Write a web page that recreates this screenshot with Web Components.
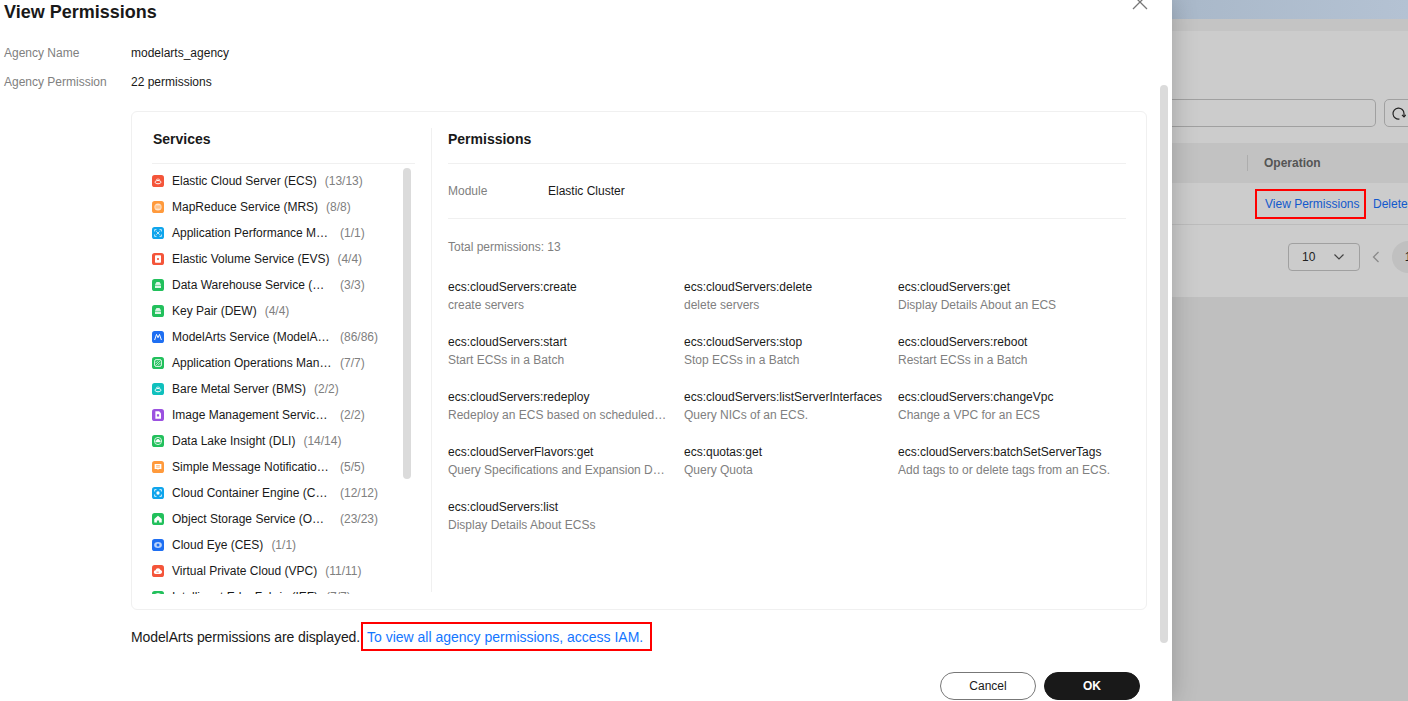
<!DOCTYPE html>
<html lang="en">
<head>
<meta charset="utf-8">
<title>View Permissions</title>
<style>
    html, body { margin: 0; height: 100%; overflow: hidden; font-family: "Liberation Sans", Arial, sans-serif; }
</style>
</head>
<body>
<perm-screen>
    <perm-dialog slot="dialog" heading="View Permissions"></perm-dialog>
    <behind-page slot="page"></behind-page>
</perm-screen>

<script>
const GLYPHS = {
    cloud: '<path d="M4 9.5c0-1.2 1.8-2.2 4-2.2s4 1 4 2.2-1.8 2.2-4 2.2-4-1-4-2.2z" fill="none" stroke="#fff" stroke-width="1.3"/><path d="M5.5 6.5C6 5 10 5 10.500 6.500" fill="none" stroke="#fff" stroke-width="1"/>',
    disc: '<circle cx="8" cy="8" r="4.800" fill="#fff" opacity=".75"/><path d="M4.500 6.800h7M4.500 9.200h7" stroke="#ff9a3c" stroke-width="1"/>',
    apm: '<path d="M3.500 6V3.500H6M10 3.500h2.500V6M3.500 10v2.500H6M10 12.500h2.500V10" fill="none" stroke="#fff" stroke-width="1"/><path d="M5.800 5.800 10.200 10.200M10.200 5.800 5.800 10.200" stroke="#fff" stroke-width="1"/>',
    volume: '<rect x="4" y="3" width="8" height="10" rx="1" fill="#fff"/><rect x="6.800" y="6.800" width="2.400" height="2.400" fill="#f4553a"/>',
    lock: '<path d="M4 7.200 6 4h4l2 3.200V12H4z" fill="#fff" opacity=".85"/><path d="M4 8.500h8" stroke="#22c05c" stroke-width=".8"/>',
    model: '<path d="M3.500 12 6 4.500 8 9l2-4.500L12.500 12" fill="none" stroke="#fff" stroke-width="1.300"/>',
    aom: '<rect x="3.500" y="3.500" width="9" height="9" rx="2" fill="none" stroke="#fff" stroke-width="1.200"/><path d="M5 11l6-6M5 8l3-3M8 11l3-3" stroke="#fff" stroke-width=".9"/>',
    image: '<path d="M4.500 3h5l2.500 2.500V13H4.500z" fill="#fff"/><rect x="6.500" y="7" width="3" height="3" fill="#9b51e0"/>',
    lake: '<circle cx="8" cy="8" r="4.800" fill="none" stroke="#fff" stroke-width="1.100"/><path d="M5.500 9.800a1.500 1.500 0 0 1 .3-2.900 2.300 2.300 0 0 1 4.400 0 1.500 1.500 0 0 1 .3 2.900z" fill="#fff"/>',
    message: '<path d="M3.500 4h9v6.500H9L8 12l-1-1.500H3.500z" fill="#fff"/><path d="M5.500 6.200h5M5.500 8.200h5" stroke="#ff9a3c" stroke-width=".9"/>',
    cce: '<path d="M3.500 6V3.500H6M10 3.500h2.500V6M3.500 10v2.500H6M10 12.500h2.500V10" fill="none" stroke="#fff" stroke-width="1.100"/><circle cx="8" cy="8" r="2.200" fill="#fff"/>',
    home: '<path d="M8 3.500 13 8v4.500h-3.500V10h-3v2.500H3V8z" fill="#fff"/>',
    eye: '<ellipse cx="8" cy="8" rx="5.200" ry="4" fill="#fff" opacity=".7"/><circle cx="8" cy="8" r="2" fill="#1f6ff2"/>',
    vpc: '<path d="M5 12a2.500 2.500 0 0 1-.300-5 3.500 3.500 0 0 1 6.700-.500A2.800 2.800 0 0 1 11 12z" fill="#fff"/><path d="M6 9.500h3" stroke="#f4553a" stroke-width="1"/>'
};

const SERVICES = [
    ['Elastic Cloud Server (ECS)', '13/13', '#f4553a', 'cloud'],
    ['MapReduce Service (MRS)', '8/8', '#ff9a3c', 'disc'],
    ['Application Performance M…', '1/1', '#0fa5ec', 'apm'],
    ['Elastic Volume Service (EVS)', '4/4', '#f4553a', 'volume'],
    ['Data Warehouse Service (…', '3/3', '#22c05c', 'lock'],
    ['Key Pair (DEW)', '4/4', '#22c05c', 'lock'],
    ['ModelArts Service (ModelA…', '86/86', '#1f6ff2', 'model'],
    ['Application Operations Man…', '7/7', '#22c05c', 'aom'],
    ['Bare Metal Server (BMS)', '2/2', '#0fc0bd', 'cloud'],
    ['Image Management Servic…', '2/2', '#9b51e0', 'image'],
    ['Data Lake Insight (DLI)', '14/14', '#22c05c', 'lake'],
    ['Simple Message Notificatio…', '5/5', '#ff9a3c', 'message'],
    ['Cloud Container Engine (C…', '12/12', '#0fa5ec', 'cce'],
    ['Object Storage Service (O…', '23/23', '#22c05c', 'home'],
    ['Cloud Eye (CES)', '1/1', '#1f6ff2', 'eye'],
    ['Virtual Private Cloud (VPC)', '11/11', '#f4553a', 'vpc'],
    ['Intelligent EdgeFabric (IEF)', '7/7', '#22c05c', 'lake']
];

const PERMISSIONS = [
    ['ecs:cloudServers:create', 'create servers'],
    ['ecs:cloudServers:delete', 'delete servers'],
    ['ecs:cloudServers:get', 'Display Details About an ECS'],
    ['ecs:cloudServers:start', 'Start ECSs in a Batch'],
    ['ecs:cloudServers:stop', 'Stop ECSs in a Batch'],
    ['ecs:cloudServers:reboot', 'Restart ECSs in a Batch'],
    ['ecs:cloudServers:redeploy', 'Redeploy an ECS based on scheduled…'],
    ['ecs:cloudServers:listServerInterfaces', 'Query NICs of an ECS.'],
    ['ecs:cloudServers:changeVpc', 'Change a VPC for an ECS'],
    ['ecs:cloudServerFlavors:get', 'Query Specifications and Expansion D…'],
    ['ecs:quotas:get', 'Query Quota'],
    ['ecs:cloudServers:batchSetServerTags', 'Add tags to or delete tags from an ECS.'],
    ['ecs:cloudServers:list', 'Display Details About ECSs']
];

class PermScreen extends HTMLElement {
    connectedCallback() {
        this.attachShadow({ mode: 'open' });
        this.shadowRoot.innerHTML = `
            <style>
                :host {
                    display: grid;
                    grid-template-columns: 1172px 1fr;
                    height: 701px;
                    overflow: hidden;
                    font-family: "Liberation Sans", Arial, sans-serif;
                }
                ::slotted([slot="dialog"]) {
                    position: relative;
                    z-index: 1;
                }
            </style>
            <slot name="dialog"></slot>
            <slot name="page"></slot>
        `;
    }
}

class BehindPage extends HTMLElement {
    connectedCallback() {
        this.attachShadow({ mode: 'open' });
        this.shadowRoot.innerHTML = `
            <style>
                :host {
                    display: flex;
                    flex-direction: column;
                    height: 701px;
                    overflow: hidden;
                    background: #bfbfbf;
                    font-size: 12px;
                }
                .banner { height: 19px; flex: none; background: linear-gradient(90deg, #a9b8c9, #b4c2d3); }
                .strip { height: 12px; flex: none; background: #c4c4c4; }
                .panel { height: 266px; flex: none; background: #cccccc; overflow: hidden; }
                .search { display: flex; gap: 8px; margin-top: 68px; height: 28px; }
                .input {
                    width: 204px;
                    flex: none;
                    box-sizing: border-box;
                    border: 1px solid #a0a0a0;
                    border-left: none;
                    border-radius: 0 5px 5px 0;
                }
                .refresh {
                    width: 40px;
                    flex: none;
                    box-sizing: border-box;
                    border: 1px solid #a0a0a0;
                    border-radius: 5px;
                    display: flex;
                    align-items: center;
                    padding-left: 6px;
                }
                .thead {
                    display: flex;
                    align-items: center;
                    height: 40px;
                    margin-top: 16px;
                    background: #c2c2c2;
                    padding-left: 75px;
                }
                .thead i { width: 1px; height: 16px; background: #adadad; margin-right: 16px; }
                .thead b { color: #555; }
                .row {
                    display: flex;
                    align-items: center;
                    height: 42px;
                    box-sizing: border-box;
                    border-bottom: 1px solid #bcbcbc;
                    padding-left: 83px;
                    color: #1259cc;
                    white-space: nowrap;
                }
                .mark {
                    border: 2px solid #ff0000;
                    height: 30px;
                    width: 111px;
                    box-sizing: border-box;
                    display: flex;
                    align-items: center;
                    padding-left: 8px;
                    margin-right: 7px;
                }
                .pager { display: flex; align-items: center; height: 32px; margin-top: 16px; padding-left: 116px; }
                .select {
                    width: 72px;
                    height: 28px;
                    flex: none;
                    box-sizing: border-box;
                    border: 1px solid #a0a0a0;
                    border-radius: 4px;
                    display: flex;
                    align-items: center;
                    justify-content: space-between;
                    padding: 0 15px 0 13px;
                    color: #222;
                }
                .prev { margin-left: 12px; flex: none; }
                .page {
                    width: 32px;
                    height: 32px;
                    flex: none;
                    margin-left: 12px;
                    border-radius: 50%;
                    background: #c0c0c0;
                    display: flex;
                    align-items: center;
                    justify-content: center;
                    color: #222;
                }
            </style>
            <div class="banner"></div>
            <div class="strip"></div>
            <div class="panel">
                <div class="search">
                    <div class="input"></div>
                    <div class="refresh">
                        <svg width="15" height="15" viewBox="0 0 15 15" fill="none" stroke="#222" stroke-width="1.200"><path d="M8.500 13A5.500 5.500 0 1 1 13 7.500V10.500"/><path d="M11 8.800 13 10.800 14.800 8.800"/></svg>
                    </div>
                </div>
                <div class="thead"><i></i><b>Operation</b></div>
                <div class="row"><div class="mark">View Permissions</div><span>Delete</span></div>
                <div class="pager">
                    <div class="select">
                        <span>10</span>
                        <svg width="10" height="6" viewBox="0 0 10 6" fill="none" stroke="#444" stroke-width="1.200"><path d="M.5.5 5 5 9.500.5"/></svg>
                    </div>
                    <svg class="prev" width="8" height="12" viewBox="0 0 8 12" fill="none" stroke="#8a8a8a" stroke-width="1.300"><path d="M6.500 1 1.500 6l5 5"/></svg>
                    <div class="page">1</div>
                </div>
            </div>
        `;
    }
}

class PermDialog extends HTMLElement {
    connectedCallback() {
        this.attachShadow({ mode: 'open' });
        this.shadowRoot.innerHTML = `
            <style>
                :host {
                    display: block;
                    width: 1172px;
                    height: 701px;
                    overflow: hidden;
                    background: #fff;
                    box-shadow: 0 0 24px rgba(0, 0, 0, 0.22);
                    color: #191919;
                    font-size: 12px;
                }
                .inner { display: flex; flex-direction: column; height: 100%; box-sizing: border-box; }
                .title-row {
                    display: flex;
                    justify-content: space-between;
                    align-items: flex-start;
                    height: 24px;
                    flex: none;
                    margin-bottom: 14px;
                    padding: 0 24px 0 4px;
                }
                h2 { margin: 0; font-size: 18px; line-height: 24px; font-weight: 700; }
                .close { margin-top: -6px; }
                .info {
                    display: grid;
                    grid-template-columns: 127px 1fr;
                    grid-auto-rows: 29px;
                    align-items: center;
                    padding-left: 4px;
                    margin-bottom: 15px;
                    flex: none;
                }
                .info span:nth-child(odd) { color: #808080; }
                .body { padding: 0 25px 0 131px; flex: none; }
                .note {
                    display: flex;
                    align-items: center;
                    height: 29px;
                    margin-top: 12px;
                    font-size: 14px;
                    white-space: nowrap;
                }
                .note .text { width: 230px; flex: none; letter-spacing: -0.1px; }
                .note .mark {
                    box-sizing: border-box;
                    height: 29px;
                    width: 291px;
                    border: 2px solid #ff0000;
                    padding-left: 4px;
                    display: flex;
                    align-items: center;
                    color: #1476ff;
                }
                .footer {
                    display: flex;
                    justify-content: flex-end;
                    gap: 8px;
                    margin-top: 21px;
                    padding-right: 32px;
                    flex: none;
                }
                .scrollbar {
                    position: absolute;
                    left: 1160px;
                    top: 85px;
                    width: 8px;
                    height: 558px;
                    background: #dbdbdb;
                    border-radius: 4px;
                }
            </style>
            <div class="inner">
                <div class="title-row">
                    <h2>${this.getAttribute('heading')}</h2>
                    <svg class="close" width="16" height="16" viewBox="0 0 16 16" fill="none" stroke="#777" stroke-width="1.300"><path d="M1 1l14 14M15 1 1 15"/></svg>
                </div>
                <div class="info">
                    <span>Agency Name</span><span>modelarts_agency</span>
                    <span>Agency Permission</span><span>22 permissions</span>
                </div>
                <div class="body">
                    <perm-card></perm-card>
                    <div class="note"><span class="text">ModelArts permissions are displayed.</span><span class="mark">To view all agency permissions, access IAM.</span></div>
                </div>
                <div class="footer">
                    <pill-button>Cancel</pill-button>
                    <pill-button primary>OK</pill-button>
                </div>
            </div>
            <div class="scrollbar"></div>
        `;
    }
}

class PermCard extends HTMLElement {
    connectedCallback() {
        this.attachShadow({ mode: 'open' });
        this.shadowRoot.innerHTML = `
            <style>
                :host {
                    display: flex;
                    box-sizing: border-box;
                    height: 499px;
                    border: 1px solid #f0f0f0;
                    border-radius: 6px;
                    padding: 16px 20px 17px 20px;
                }
                .services { width: 263px; flex: none; padding-right: 16px; border-right: 1px solid #f0f0f0; display: flex; flex-direction: column; }
                .perms { flex: 1; padding-left: 16px; min-width: 0; }
                .head {
                    height: 36px;
                    box-sizing: border-box;
                    border-bottom: 1px solid #f0f0f0;
                    font-size: 14px;
                    font-weight: 700;
                    line-height: 22px;
                    flex: none;
                }
                .services .head { padding-left: 1px; }
                .module {
                    display: flex;
                    align-items: center;
                    height: 55px;
                    box-sizing: border-box;
                    border-bottom: 1px solid #f0f0f0;
                }
                .module span:first-child { width: 100px; color: #808080; }
                .total { color: #808080; line-height: 16px; margin: 20px 0 23px; }
                .grid { display: grid; grid-template-columns: 220px 198px 1fr; gap: 19px 16px; }
            </style>
            <div class="services">
                <div class="head">Services</div>
                <service-list></service-list>
            </div>
            <div class="perms">
                <div class="head">Permissions</div>
                <div class="module"><span>Module</span><span>Elastic Cluster</span></div>
                <div class="total">Total permissions: 13</div>
                <div class="grid">
                    ${PERMISSIONS.map(p => `<perm-entry name="${p[0]}" desc="${p[1]}"></perm-entry>`).join('')}
                </div>
            </div>
        `;
    }
}

class ServiceList extends HTMLElement {
    connectedCallback() {
        this.attachShadow({ mode: 'open' });
        this.shadowRoot.innerHTML = `
            <style>
                :host {
                    display: block;
                    position: relative;
                    flex: 1;
                    min-height: 0;
                    margin-bottom: -2px;
                    overflow: hidden;
                    padding-top: 4px;
                }
                .bar {
                    position: absolute;
                    left: 251px;
                    top: 4px;
                    width: 8px;
                    height: 311px;
                    background: #dbdbdb;
                    border-radius: 4px;
                }
            </style>
            ${SERVICES.map(s => `<service-item name="${s[0]}" count="${s[1]}" color="${s[2]}" glyph="${s[3]}"></service-item>`).join('')}
            <div class="bar"></div>
        `;
    }
}

class ServiceItem extends HTMLElement {
    connectedCallback() {
        this.attachShadow({ mode: 'open' });
        const color = this.getAttribute('color');
        const name = this.getAttribute('name');
        this.shadowRoot.innerHTML = `
            <style>
                :host {
                    display: flex;
                    align-items: center;
                    height: 26px;
                    white-space: nowrap;
                }
                svg { flex: none; margin-right: 8px; }
                .cut { width: 160px; flex: none; }
                .count { margin-left: 8px; color: #808080; }
            </style>
            <svg width="12" height="12" viewBox="0 0 16 16"><rect width="16" height="16" rx="3.500" fill="${color}"/>${GLYPHS[this.getAttribute('glyph')]}</svg>
            <span class="${name.endsWith('…') ? 'cut' : ''}">${name}</span>
            <span class="count">(${this.getAttribute('count')})</span>
        `;
    }
}

class PermEntry extends HTMLElement {
    connectedCallback() {
        this.attachShadow({ mode: 'open' });
        this.shadowRoot.innerHTML = `
            <style>
                :host { display: block; min-width: 0; line-height: 18px; white-space: nowrap; }
                .desc { color: #808080; }
            </style>
            <div>${this.getAttribute('name')}</div>
            <div class="desc">${this.getAttribute('desc')}</div>
        `;
    }
}

class PillButton extends HTMLElement {
    connectedCallback() {
        this.attachShadow({ mode: 'open' });
        this.shadowRoot.innerHTML = `
            <style>
                :host {
                    display: flex;
                    align-items: center;
                    justify-content: center;
                    width: 96px;
                    height: 28px;
                    box-sizing: border-box;
                    border: 1px solid #777;
                    border-radius: 14px;
                    background: #fff;
                    color: #191919;
                    font-size: 12px;
                }
                :host([primary]) {
                    background: #191919;
                    border-color: #191919;
                    color: #fff;
                    font-weight: 700;
                }
            </style>
            <slot></slot>
        `;
    }
}

customElements.define('perm-screen', PermScreen);
customElements.define('behind-page', BehindPage);
customElements.define('perm-dialog', PermDialog);
customElements.define('perm-card', PermCard);
customElements.define('service-list', ServiceList);
customElements.define('service-item', ServiceItem);
customElements.define('perm-entry', PermEntry);
customElements.define('pill-button', PillButton);
</script>
</body>
</html>
